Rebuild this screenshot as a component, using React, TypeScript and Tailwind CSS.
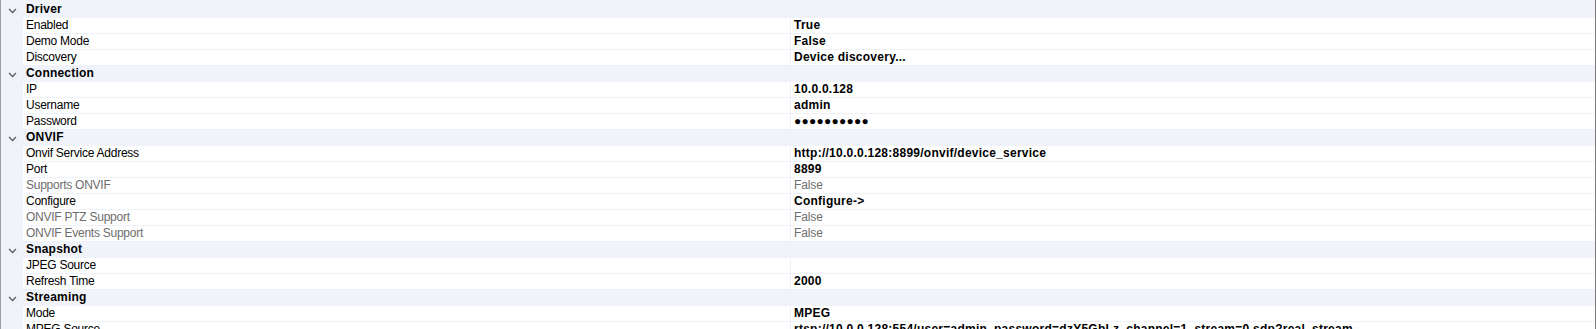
import React from "react";

type Row =
  | { kind: "cat"; label: string }
  | { kind: "prop"; label: string; value: string; disabled?: boolean };

const rows: Row[] = [
  { kind: "cat", label: "Driver" },
  { kind: "prop", label: "Enabled", value: "True" },
  { kind: "prop", label: "Demo Mode", value: "False" },
  { kind: "prop", label: "Discovery", value: "Device discovery..." },
  { kind: "cat", label: "Connection" },
  { kind: "prop", label: "IP", value: "10.0.0.128" },
  { kind: "prop", label: "Username", value: "admin" },
  { kind: "prop", label: "Password", value: "●●●●●●●●●●" },
  { kind: "cat", label: "ONVIF" },
  { kind: "prop", label: "Onvif Service Address", value: "http://10.0.0.128:8899/onvif/device_service" },
  { kind: "prop", label: "Port", value: "8899" },
  { kind: "prop", label: "Supports ONVIF", value: "False", disabled: true },
  { kind: "prop", label: "Configure", value: "Configure->" },
  { kind: "prop", label: "ONVIF PTZ Support", value: "False", disabled: true },
  { kind: "prop", label: "ONVIF Events Support", value: "False", disabled: true },
  { kind: "cat", label: "Snapshot" },
  { kind: "prop", label: "JPEG Source", value: "" },
  { kind: "prop", label: "Refresh Time", value: "2000" },
  { kind: "cat", label: "Streaming" },
  { kind: "prop", label: "Mode", value: "MPEG" },
  {
    kind: "prop",
    label: "MPEG Source",
    value: "rtsp://10.0.0.128:554/user=admin_password=dzY5GbLz_channel=1_stream=0.sdp?real_stream",
  },
];

function Chevron() {
  return (
    <svg width="9" height="6" viewBox="0 0 9 6" className="block">
      <path d="M1 1 L4.5 4.5 L8 1" fill="none" stroke="#5a5a5a" strokeWidth="1.3" />
    </svg>
  );
}

export default function App() {
  return (
    <div
      className="w-[1596px] h-[329px] overflow-hidden bg-[#f0f4fa] pt-[2px] border-l border-l-[#a0a0a0] border-r border-r-[#7d7d7d] text-[12px] leading-[15px] text-black"
      style={{ fontFamily: '"Liberation Sans", Arial, sans-serif' }}
    >
      {rows.map((r, i) =>
        r.kind === "cat" ? (
          <div key={i} className="flex h-[16px] bg-[#f0f4fa]">
            <div className="w-[22px] flex items-center justify-center pl-[1px] pt-[1px]">
              <Chevron />
            </div>
            <div className="pl-[3px] font-bold tracking-[0.2px]">{r.label}</div>
          </div>
        ) : (
          <div key={i} className="flex h-[16px]">
            <div className="w-[22px] shrink-0 bg-[#f0f4fa]" />
            <div
              className={`w-[767px] shrink-0 bg-white border-b border-b-[#eef1f7] pl-[3px] whitespace-nowrap tracking-[-0.25px] ${
                r.disabled ? "text-[#6d6d6d]" : "text-black"
              }`}
            >
              {r.label}
            </div>
            <div className="w-[1px] shrink-0 bg-[#eef1f7]" />
            <div
              className={`flex-1 bg-white border-b border-b-[#eef1f7] pl-[3px] whitespace-nowrap overflow-hidden ${
                r.disabled ? "text-[#6d6d6d] font-normal tracking-[-0.1px]" : "text-black font-bold tracking-[0.25px]"
              }`}
            >
              {r.value}
            </div>
          </div>
        )
      )}
    </div>
  );
}
